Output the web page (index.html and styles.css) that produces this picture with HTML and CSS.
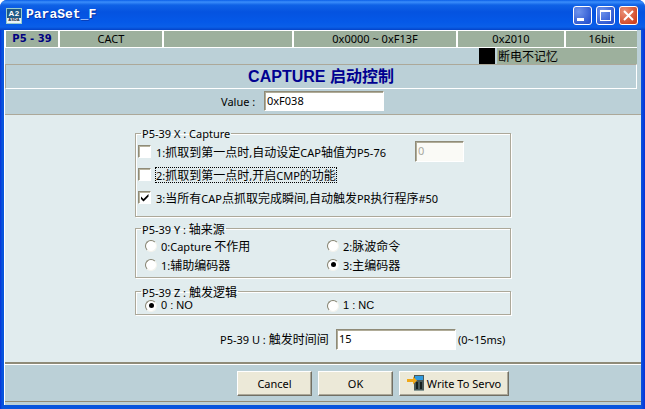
FILE: index.html
```html
<!DOCTYPE html>
<html lang="zh">
<head>
<meta charset="utf-8">
<title>ParaSet_F</title>
<link rel="stylesheet" href="styles.css">
</head>
<body>
<div class="window">
  <header class="titlebar">
    <span class="appicon"><span class="appicon-main">A2</span><span class="appicon-sub">ASDA</span></span>
    <span class="title">ParaSet_F</span>
    <span class="controls">
      <span class="ctl"><svg width="19" height="19" viewBox="0 0 19 19"><rect x="4" y="12" width="7" height="3" fill="#fff"/></svg></span>
      <span class="ctl"><svg width="19" height="19" viewBox="0 0 19 19"><rect x="4.5" y="4.5" width="10" height="10" fill="none" stroke="#fff"/><rect x="4" y="4" width="11" height="2" fill="#fff"/></svg></span>
      <span class="ctl ctl-close"><svg width="19" height="19" viewBox="0 0 19 19"><path d="M5 5l9 9M14 5l-9 9" stroke="#fff" stroke-width="2" fill="none"/></svg></span>
    </span>
  </header>
  <div class="client">
    <div class="cells">
      <span class="cell cell-id">P5 - 39</span>
      <span class="cell cell-name">CACT</span>
      <span class="cell cell-blank"></span>
      <span class="cell cell-range">0x0000 ~ 0xF13F</span>
      <span class="cell cell-addr">0x2010</span>
      <span class="cell cell-bits">16bit</span>
    </div>
    <div class="memory">
      <span class="swatch"></span>
      <span class="memory-label">断电不记忆</span>
    </div>
    <h1 class="heading">CAPTURE 启动控制</h1>
    <div class="value-row">
      <label class="value-label">Value :</label>
      <span class="field field-value">0xF038</span>
    </div>
    <main class="content">
      <fieldset class="group group-x">
        <legend>P5-39 X : Capture</legend>
        <div class="check-row">
          <span class="check"></span>
          <span class="check-text">1:<span class="zh">抓取到第一点时</span>,<span class="zh">自动设定</span>CAP<span class="zh">轴值为</span>P5-76</span>
          <span class="field field-off">0</span>
        </div>
        <div class="check-row">
          <span class="check"></span>
          <span class="check-text focused">2:<span class="zh">抓取到第一点时</span>,<span class="zh">开启</span>CMP<span class="zh">的功能</span></span>
        </div>
        <div class="check-row">
          <span class="check"><svg width="11" height="11" viewBox="0 0 11 11"><path d="M2 4.500l2.500 2.500 5-5v2.400l-5 5-2.500-2.500z" fill="#000"/></svg></span>
          <span class="check-text">3:<span class="zh">当所有</span>CAP<span class="zh">点抓取完成瞬间</span>,<span class="zh">自动触发</span>PR<span class="zh">执行程序</span>#50</span>
        </div>
      </fieldset>
      <fieldset class="group group-y">
        <legend>P5-39 Y : <span class="zh">轴来源</span></legend>
        <div class="radios">
          <span class="radio-item"><span class="radio"></span><span>0:Capture <span class="zh">不作用</span></span></span>
          <span class="radio-item"><span class="radio"></span><span>2:<span class="zh">脉波命令</span></span></span>
          <span class="radio-item"><span class="radio"></span><span>1:<span class="zh">辅助编码器</span></span></span>
          <span class="radio-item"><span class="radio radio-on"></span><span>3:<span class="zh">主编码器</span></span></span>
        </div>
      </fieldset>
      <fieldset class="group group-z">
        <legend>P5-39 Z : <span class="zh">触发逻辑</span></legend>
        <div class="radios">
          <span class="radio-item"><span class="radio radio-on"></span>0 : NO</span>
          <span class="radio-item"><span class="radio"></span>1 : NC</span>
        </div>
      </fieldset>
      <div class="time-row">
        <span class="time-label">P5-39 U : <span class="zh">触发时间间</span></span>
        <span class="field field-time">15</span>
        <span class="time-hint">(0~15ms)</span>
      </div>
    </main>
    <footer class="footer">
      <button class="btn btn-plain">Cancel</button>
      <button class="btn btn-plain">OK</button>
      <button class="btn btn-write">
        <svg width="17" height="17" viewBox="0 0 17 17"><rect x="7" y="0" width="10" height="16" fill="#4a5a5a"/><rect x="8" y="1" width="8" height="4" fill="#2f9be0"/><rect x="9" y="7" width="2" height="7" fill="#16201f"/><rect x="13" y="7" width="2" height="7" fill="#16201f"/><rect x="7" y="15" width="10" height="1" fill="#8a9a96"/><path d="M0 4h6V1.500L10 5.500 6 9.500V7H0z" fill="#f0a818"/></svg>
        <span>Write To Servo</span>
      </button>
    </footer>
  </div>
</div>
</body>
</html>
```
FILE: styles.css
```css
* { box-sizing: border-box; }
html, body { margin: 0; padding: 0; }
body {
  width: 645px;
  height: 409px;
  overflow: hidden;
  font: 11px/13px "Noto Sans", "Noto Sans CJK SC", sans-serif;
  color: #000;
}
.zh { font-family: "Noto Sans CJK SC", sans-serif; font-size: 12px; line-height: 13px; }
.window {
  width: 645px;
  height: 409px;
  display: flex;
  flex-direction: column;
  padding: 0 4px 4px;
  background: linear-gradient(90deg, #0831d9 0, #0855dd 2px, #0855dd 641px, #0831d9 100%);
  border-radius: 7px 7px 0 0;
  overflow: hidden;
}
.titlebar {
  flex: none;
  height: 30px;
  margin: 0 -4px;
  padding: 0 7px 0 6px;
  display: flex;
  align-items: center;
  background: linear-gradient(180deg, #0a5fe8 0, #3b8efb 2px, #0f62e6 5px, #0553e0 12px, #0559e8 22px, #0a5fe8 27px, #0443c8 30px);
}
.appicon {
  width: 16px;
  height: 16px;
  margin-top: 1px;
  display: flex;
  flex-direction: column;
  align-items: center;
  background: #1f5a86;
  border: 1px solid #9cc;
  color: #fff;
  font-family: "Liberation Sans", sans-serif;
  font-weight: bold;
  overflow: hidden;
}
.appicon-main { font-size: 8px; line-height: 9.500px; letter-spacing: 0.5px; }
.appicon-sub { font-size: 4px; line-height: 4.500px; background: #eaf2f8; color: #123; width: 100%; text-align: center; }
.title {
  margin-left: 4px;
  font: bold 13px/16px "Liberation Mono", monospace;
  color: #fff;
  text-shadow: 1px 1px 0 #0a2fa0;
}
.controls { margin-left: auto; display: flex; gap: 4px; }
.ctl {
  width: 19px;
  height: 19px;
  display: block;
  border-radius: 3px;
  outline: 1px solid #fff;
  outline-offset: -1px;
  background: radial-gradient(circle at 30% 30%, #6f94ec, #2a55d0 75%);
}
.ctl svg { display: block; }
.ctl-close { background: radial-gradient(circle at 30% 30%, #eb9279, #cf4220 75%); }

.client {
  flex: 1;
  min-height: 0;
  display: flex;
  flex-direction: column;
  background: #bbd0d7;
  border-left: 1px solid #fff;
}
.cells {
  flex: none;
  height: 18px;
  margin-right: 4px;
  display: flex;
  gap: 2px;
  padding-left: 1px;
  background: #fff;
  border-top: 1px solid #fff;
  border-bottom: 1px solid #fff;
  text-align: center;
}
.cell { background: #9db09d; line-height: 16px; height: 16px; }
.cell-id { width: 52px; font: bold 10px/16px "DejaVu Sans", sans-serif; color: #000080; }
.cell-name { width: 102px; }
.cell-blank { width: 128px; }
.cell-range { width: 162px; }
.cell-addr { width: 106px; }
.cell-bits { flex: 1; }
.memory {
  flex: none;
  height: 16px;
  margin-right: 4px;
  display: flex;
  justify-content: flex-end;
}
.swatch { width: 16px; background: #000; }
.memory-label { width: 140px; margin-left: 2px; padding-left: 1px; background: #9db09d; font: 12px/16px "Noto Sans CJK SC", sans-serif; }
.heading {
  flex: none;
  height: 25px;
  margin: 0 4px 0 0;
  border-top: 1px solid #aca899;
  border-left: 1px solid #aca899;
  border-right: 1px solid #fff;
  border-bottom: 1px solid #fff;
  text-align: center;
  font: bold 16px/23px "Liberation Sans", "Noto Sans CJK SC", sans-serif;
  color: #000090;
}
.value-row {
  flex: none;
  height: 26px;
  display: flex;
  align-items: center;
  padding: 0 0 1px 216px;
  gap: 9px;
  border-bottom: 1px solid #aca899;
}
.value-label { width: 34px; white-space: nowrap; }
.field {
  display: block;
  background: #fff;
  border: 1px solid;
  border-color: #8f8b78 #fff #fff #8f8b78;
  box-shadow: inset 1px 1px 0 #b0ac98;
  padding: 2px 2px 0 2px;
  font-size: 11px;
}
.field-value { width: 120px; height: 20px; }
.content {
  flex: none;
  height: 247px;
  background: #e1ecee;
  display: flex;
  flex-direction: column;
  padding-top: 12px;
  padding-left: 130px;
}
.group {
  width: 376px;
  margin: 0;
  padding: 0 0 0 2px;
  border: 1px solid #aca899;
  box-shadow: 1px 1px 0 #fff, inset 1px 1px 0 #fff;
  min-width: 0;
}
.group legend { height: 13px; padding: 0 1px; margin-left: 3px; line-height: 13px; white-space: nowrap; }
.group-x { height: 90px; }
.group-y { height: 56px; margin-top: 5px; padding-top: 1px; }
.group-z { height: 30px; margin-top: 7px; }
.check-row { height: 23px; display: flex; align-items: center; }
.check {
  width: 13px;
  height: 13px;
  flex: none;
  background: #fff;
  border: 1px solid;
  border-color: #8f8b78 #fff #fff #8f8b78;
  box-shadow: inset 1px 1px 0 #b8b4a0;
}
.check svg { display: block; }
.check-text { margin-left: 5px; }
.focused { outline: 1px dotted #000; }
.field-off {
  width: 49px;
  height: 21px;
  margin-left: auto;
  margin-right: 46px;
  color: #a8a8a0;
  background: #fafaf6;
}
.radios { display: grid; grid-template-columns: 182px 1fr; padding-left: 7px; }
.radio-item { display: flex; align-items: center; gap: 4px; height: 19px; }
.group-z .radio-item { height: 15px; font-family: "Liberation Sans", sans-serif; }
.radio {
  width: 12px;
  height: 12px;
  flex: none;
  border-radius: 50%;
  background: #fff;
  border: 1px solid;
  border-color: #85826f #f4f4ee #f4f4ee #85826f;
  position: relative;
}
.radio-on::after {
  content: "";
  position: absolute;
  left: 2.500px;
  top: 2.500px;
  width: 5px;
  height: 5px;
  border-radius: 50%;
  background: #000;
}
.time-row { display: flex; align-items: center; height: 22px; margin-top: 13px; padding-left: 85px; }
.time-label { width: 116px; }
.field-time { width: 120px; height: 21px; margin-right: 1px; }
.time-hint { margin-left: 1px; }
.footer {
  flex: none;
  height: 40px;
  border-top: 2px solid #8f8b78;
  border-bottom: 1px solid #8f8b78;
  box-shadow: inset 0 1px 0 #fff;
  display: flex;
  gap: 6px;
  padding: 7px 0 0 232px;
}
.btn {
  height: 25px;
  padding: 0;
  background: #ece9d8;
  border: 1px solid;
  border-color: #fff #716f64 #716f64 #fff;
  box-shadow: inset -1px -1px 0 #aca899;
  font: 11px/13px "Noto Sans", sans-serif;
  color: #000;
}
.btn-plain { width: 75px; }
.btn-write { width: 110px; display: flex; align-items: center; justify-content: center; gap: 3px; }
.btn-write svg { flex: none; }
```
